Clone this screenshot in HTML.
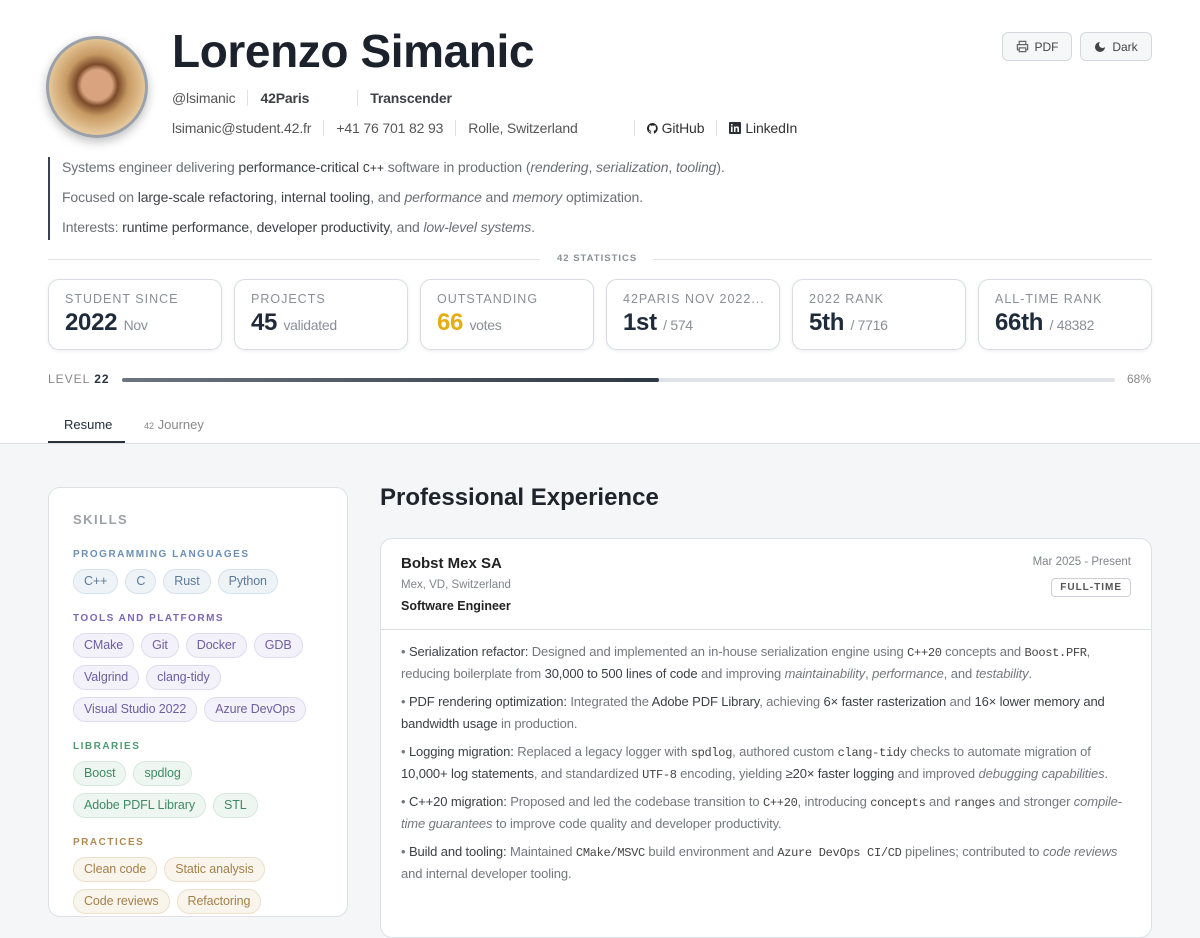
<!DOCTYPE html>
<html><head><meta charset="utf-8"><style>
*{box-sizing:border-box;margin:0;padding:0}
body{width:1200px;height:900px;overflow:hidden;font-family:"Liberation Sans",sans-serif;background:#f5f6f8;color:#222}
.top{background:#fff;height:444px;position:relative;border-bottom:1px solid #dde0e5}
.abs{position:absolute}
.avatar{left:46px;top:36px;width:102px;height:102px;border-radius:50%;border:3px solid #9aa1ab;box-shadow:0 4px 10px rgba(0,0,0,.25);background:radial-gradient(circle at 50% 48%,#d9a37f 0 22%,#7a4a2a 30%,#c89a63 45%,#e6c89b 70%,#d4b080 100%)}
h1{position:absolute;left:172px;top:24px;font-size:46px;font-weight:700;color:#1c222b;letter-spacing:-0.4px}
.row{position:absolute;left:172px;font-size:14px;color:#555;display:flex;align-items:center;white-space:nowrap;letter-spacing:-0.15px}
.sep{width:1px;height:16px;background:#dde0e5;margin:0 12px}
.btn{position:absolute;top:32px;height:29px;border:1px solid #d5d9df;border-radius:6px;background:#f6f7f9;font-size:12px;color:#444;display:flex;align-items:center;justify-content:center;gap:6px}
.bio{position:absolute;left:48px;top:157px;height:83px;border-left:2px solid #3a4150;padding-left:12px;font-size:14px;color:#6b6f76;letter-spacing:-0.12px;white-space:nowrap}
.bio p{height:30px;line-height:20px}
.bio b{font-weight:400;color:#3d4148}
.stl{position:absolute;top:259px;height:1px;background:#e1e4e8}
.card{position:absolute;top:279px;width:174px;height:71px;border:1px solid #d8dce2;border-radius:11px;box-shadow:0 1px 3px rgba(0,0,0,.08);padding:12px 16px}
.card .l{font-size:12.5px;letter-spacing:1px;color:#8a8f97;white-space:nowrap}
.card .v{font-size:24px;font-weight:700;color:#1f2a3a;margin-top:3px;white-space:nowrap;letter-spacing:-0.3px}
.card .v span{font-size:14px;font-weight:400;color:#8a8f97}
.skills{position:absolute;left:48px;top:487px;width:300px;height:430px;background:#fff;border:1px solid #dde0e5;border-radius:12px;padding:24px 24px}
.skills h3{font-size:13px;letter-spacing:1.5px;color:#9ca1a8;margin-bottom:22px}
.skills h4{font-size:10px;letter-spacing:1.5px;margin:0 0 9px}
.tags{display:flex;flex-wrap:wrap;gap:7px 7px;margin-bottom:19px}
.tag{font-size:12.5px;padding:0 10px;height:25px;line-height:23px;border-radius:13px;border:1px solid;letter-spacing:-0.1px}
.b .tag{background:#eef3f8;border-color:#d6e1ec;color:#5d7a99}
.p .tag{background:#f3f1f9;border-color:#e0dbee;color:#6d5fa0}
.g .tag{background:#eef6f2;border-color:#d6e8de;color:#3f8a62}
.o .tag{background:#faf5ec;border-color:#ece0c9;color:#a4804a}
.exp{position:absolute;left:380px;top:538px;width:772px;height:400px;background:#fff;border:1px solid #dde0e5;border-radius:12px}
.eh{height:91px;border-bottom:1px solid #dde0e5;position:relative;padding:16px 20px}
.eb{padding:11px 20px;font-size:13px;color:#73777e;line-height:22px;letter-spacing:-0.12px}
.eb p{margin-bottom:6px}
.eb b{font-weight:400;color:#3c4047}
.eb code{font-family:"Liberation Mono",monospace;font-size:12px;color:#444;line-height:1;letter-spacing:-0.3px}
</style></head><body>
<div class="top">
<div class="abs avatar"></div>
<h1>Lorenzo Simanic</h1>
<div class="row" style="top:90px"><span>@lsimanic</span><span class="sep"></span><span style="color:#3c4047;font-weight:700">42Paris</span><span style="width:36px"></span><span class="sep"></span><span style="color:#3c4047;font-weight:700">Transcender</span></div>
<div class="row" style="top:120px"><span>lsimanic@student.42.fr</span><span class="sep"></span><span>+41 76 701 82 93</span><span class="sep"></span><span>Rolle, Switzerland</span><span style="width:44px"></span><span class="sep"></span><span style="color:#333;display:flex;align-items:center;gap:4px"><svg width="11" height="11" viewBox="0 0 16 16"><path fill="#222" d="M8 0a8 8 0 0 0-2.5 15.6c.4 0 .5-.2.5-.4v-1.5c-2.2.5-2.7-1-2.7-1-.4-.9-.9-1.2-.9-1.2-.7-.5.1-.5.1-.5.8.1 1.2.8 1.2.8.7 1.3 1.9.9 2.3.7.1-.5.3-.9.5-1.1-1.8-.2-3.6-.9-3.6-4 0-.9.3-1.6.8-2.1-.1-.2-.4-1 .1-2.1 0 0 .7-.2 2.2.8a7.5 7.5 0 0 1 4 0c1.5-1 2.2-.8 2.2-.8.4 1.1.2 1.9.1 2.1.5.6.8 1.3.8 2.1 0 3.1-1.9 3.7-3.6 3.9.3.3.5.8.5 1.5v2.2c0 .2.1.5.6.4A8 8 0 0 0 8 0z"/></svg>GitHub</span><span class="sep"></span><span style="color:#333;display:flex;align-items:center;gap:4px"><svg width="12" height="12" viewBox="0 0 12 12"><rect width="12" height="12" rx="1" fill="#2a2f38"/><rect x="2" y="4.5" width="1.6" height="5.5" fill="#fff"/><circle cx="2.8" cy="2.8" r="0.9" fill="#fff"/><path d="M5 4.5h1.5v.8c.4-.6 1-.9 1.7-.9 1.2 0 1.8.8 1.8 2.2V10H8.4V7c0-.8-.3-1.2-.9-1.2s-1 .5-1 1.2v3H5z" fill="#fff"/></svg>LinkedIn</span></div>
<div class="btn" style="left:1002px;width:70px"><svg width="13" height="13" viewBox="0 0 14 14" fill="none" stroke="#666" stroke-width="1.3"><path d="M3.5 5V1.5h7V5M3.5 10.5h-2V5h11v5.5h-2M3.5 8.5h7v4h-7z"/></svg>PDF</div>
<div class="btn" style="left:1080px;width:72px"><svg width="12" height="12" viewBox="0 0 12 12"><path d="M6 1a5 5 0 1 0 5 5A3.5 3.5 0 0 1 6 1z" fill="#444"/></svg>Dark</div>
<div class="bio"><p>Systems engineer delivering <b>performance-critical</b> <code style="font-family:'Liberation Mono',monospace;font-size:12px;color:#333">C++</code> software in production (<i>rendering</i>, <i>serialization</i>, <i>tooling</i>).</p><p>Focused on <b>large-scale refactoring</b>, <b>internal tooling</b>, and <i>performance</i> and <i>memory</i> optimization.</p><p>Interests: <b>runtime performance</b>, <b>developer productivity</b>, and <i>low-level systems</i>.</p></div>
<div class="stl" style="left:48px;width:492px"></div>
<div class="abs" style="left:557px;top:253px;font-size:9.5px;font-weight:700;letter-spacing:1px;color:#8a8f97">42 STATISTICS</div>
<div class="stl" style="left:653px;width:499px"></div>
<div class="card" style="left:48px"><div class="l">STUDENT SINCE</div><div class="v">2022 <span>Nov</span></div></div>
<div class="card" style="left:234px"><div class="l">PROJECTS</div><div class="v">45 <span>validated</span></div></div>
<div class="card" style="left:420px"><div class="l">OUTSTANDING</div><div class="v" style="color:#e6ad12">66 <span>votes</span></div></div>
<div class="card" style="left:606px"><div class="l">42PARIS NOV 2022...</div><div class="v">1st <span>/ 574</span></div></div>
<div class="card" style="left:792px"><div class="l">2022 RANK</div><div class="v">5th <span>/ 7716</span></div></div>
<div class="card" style="left:978px"><div class="l">ALL-TIME RANK</div><div class="v">66th <span>/ 48382</span></div></div>
<div class="abs" style="left:48px;top:372px;font-size:12px;letter-spacing:1px;color:#888">LEVEL <b style="color:#2a3240">22</b></div>
<div class="abs" style="left:122px;top:378px;width:993px;height:4px;border-radius:2px;background:#dfe2e6"><div style="width:537px;height:4px;border-radius:2px;background:linear-gradient(90deg,#6c7480,#2e3744)"></div></div>
<div class="abs" style="left:1127px;top:372px;font-size:12px;color:#888">68%</div>
<div class="abs" style="left:64px;top:417px;font-size:13px;color:#1f2a3a">Resume</div>
<div class="abs" style="left:48px;top:441px;width:77px;height:2px;background:#2a3240"></div>
<div class="abs" style="left:144px;top:417px;font-size:13px;color:#888"><span style="font-size:9px">42</span> Journey</div>
</div>
<div class="skills"><h3>SKILLS</h3>
<h4 style="color:#6b8fb5">PROGRAMMING LANGUAGES</h4><div class="tags b"><span class="tag">C++</span><span class="tag">C</span><span class="tag">Rust</span><span class="tag">Python</span></div>
<h4 style="color:#7b68b0">TOOLS AND PLATFORMS</h4><div class="tags p"><span class="tag">CMake</span><span class="tag">Git</span><span class="tag">Docker</span><span class="tag">GDB</span><span class="tag">Valgrind</span><span class="tag">clang-tidy</span><span class="tag">Visual Studio 2022</span><span class="tag">Azure DevOps</span></div>
<h4 style="color:#4e9a72">LIBRARIES</h4><div class="tags g"><span class="tag">Boost</span><span class="tag">spdlog</span><span class="tag">Adobe PDFL Library</span><span class="tag">STL</span></div>
<h4 style="color:#b08a55">PRACTICES</h4><div class="tags o"><span class="tag">Clean code</span><span class="tag">Static analysis</span><span class="tag">Code reviews</span><span class="tag">Refactoring</span></div>
</div>
<div class="abs" style="left:380px;top:484px;font-size:24px;font-weight:700;color:#1f242c">Professional Experience</div>
<div class="exp"><div class="eh">
<div style="font-size:15px;font-weight:700;color:#222">Bobst Mex SA</div>
<div style="font-size:11.5px;color:#80848b;margin-top:7px">Mex, VD, Switzerland</div>
<div style="font-size:12.5px;font-weight:700;color:#222;margin-top:8px">Software Engineer</div>
<div class="abs" style="right:20px;top:17px;font-size:11.5px;color:#80848b">Mar 2025 - Present</div>
<div class="abs" style="right:20px;top:39px;border:1px solid #ccd0d6;border-radius:4px;padding:3px 8px;font-size:10px;font-weight:700;letter-spacing:1px;color:#555">FULL-TIME</div>
</div>
<div class="eb">
<p>• <b>Serialization refactor:</b> Designed and implemented an in-house serialization engine using <code>C++20</code> concepts and <code>Boost.PFR</code>, reducing boilerplate from <b>30,000 to 500 lines of code</b> and improving <i>maintainability</i>, <i>performance</i>, and <i>testability</i>.</p>
<p>• <b>PDF rendering optimization:</b> Integrated the <b>Adobe PDF Library</b>, achieving <b>6× faster rasterization</b> and <b>16× lower memory and bandwidth usage</b> in production.</p>
<p>• <b>Logging migration:</b> Replaced a legacy logger with <code>spdlog</code>, authored custom <code>clang-tidy</code> checks to automate migration of <b>10,000+ log statements</b>, and standardized <code>UTF-8</code> encoding, yielding <b>≥20× faster logging</b> and improved <i>debugging capabilities</i>.</p>
<p>• <b>C++20 migration:</b> Proposed and led the codebase transition to <code>C++20</code>, introducing <code>concepts</code> and <code>ranges</code> and stronger <i>compile-time guarantees</i> to improve code quality and developer productivity.</p>
<p>• <b>Build and tooling:</b> Maintained <code>CMake/MSVC</code> build environment and <code>Azure DevOps CI/CD</code> pipelines; contributed to <i>code reviews</i> and internal developer tooling.</p>
</div></div>
</body></html>
